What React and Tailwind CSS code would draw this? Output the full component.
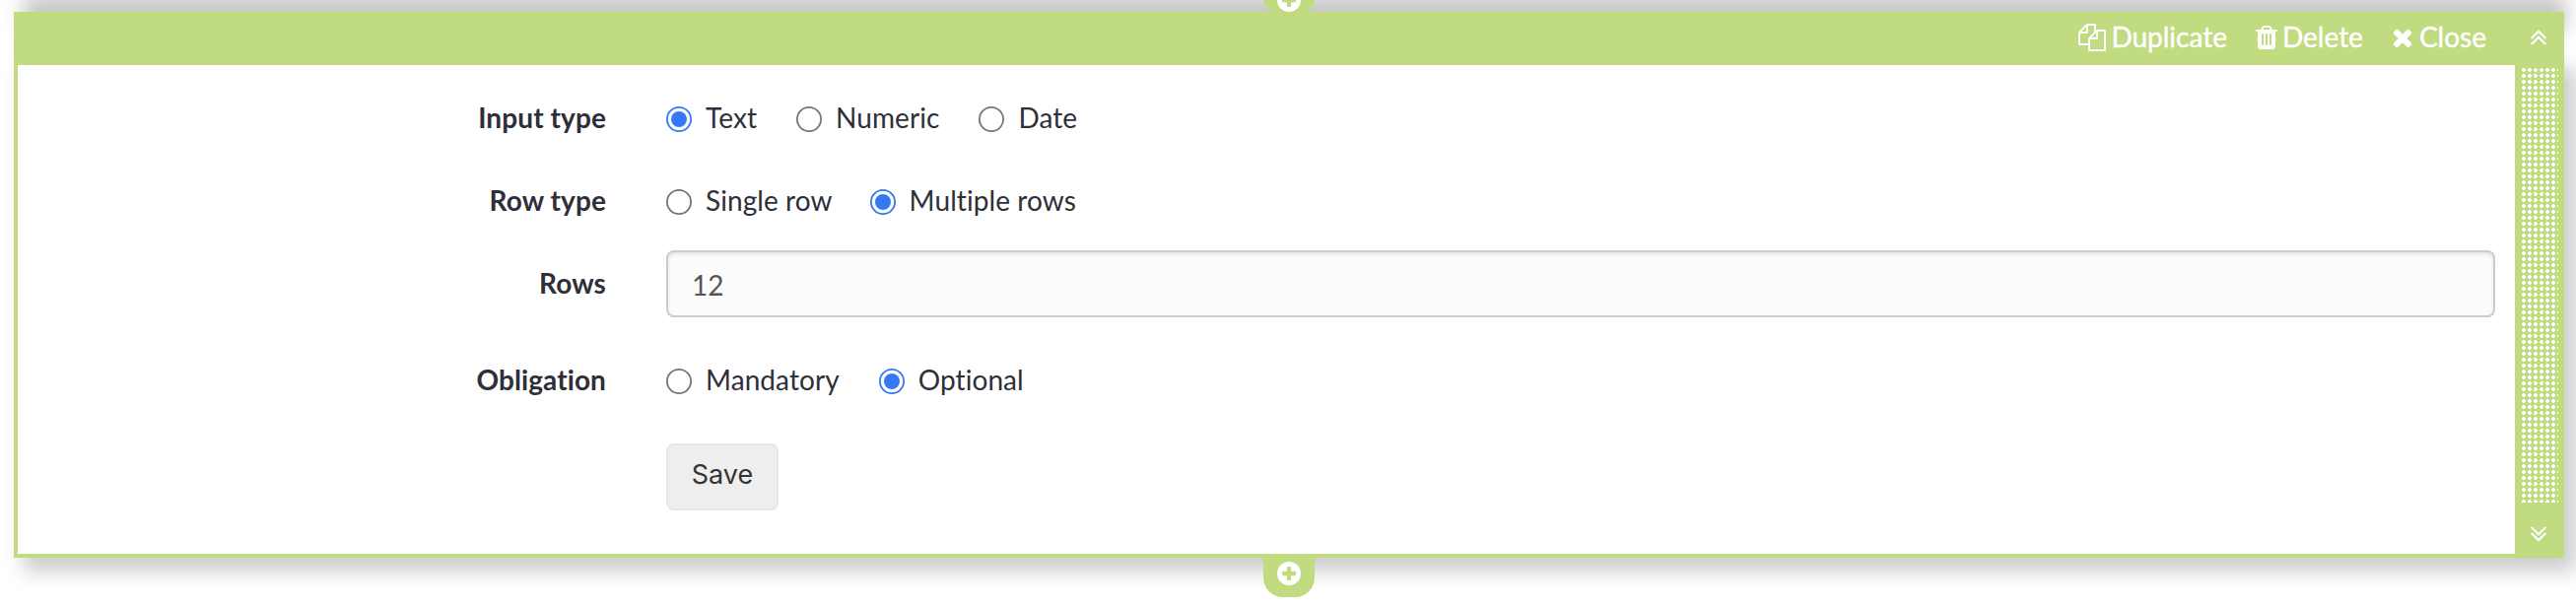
import React from "react";

function Glyph({ d, w, className, h = 1792 }) {
  return (
    <svg viewBox={`0 0 ${w} ${h}`} className={className} fill="currentColor">
      <path d={d} />
    </svg>
  );
}

const COPY =
  "M1696 384q40 0 68 28t28 68v1216q0 40-28 68t-68 28h-960q-40 0-68-28t-28-68v-288h-544q-40 0-68-28t-28-68v-672q0-40 20-88t48-76l408-408q28-28 76-48t88-20h416q40 0 68 28t28 68v328q68-40 128-40h416zm-544 213l-299 299h299v-299zm-640-384l-299 299h299v-299zm196 647l316-316v-416h-384v416q0 40-28 68t-68 28h-416v640h512v-256q0-40 20-88t48-76zm956 804v-1152h-384v416q0 40-28 68t-68 28h-416v640h896z";
const TRASH =
  "M512 1376v-704q0-14-9-23t-23-9h-64q-14 0-23 9t-9 23v704q0 14 9 23t23 9h64q14 0 23-9t9-23zm256 0v-704q0-14-9-23t-23-9h-64q-14 0-23 9t-9 23v704q0 14 9 23t23 9h64q14 0 23-9t9-23zm256 0v-704q0-14-9-23t-23-9h-64q-14 0-23 9t-9 23v704q0 14 9 23t23 9h64q14 0 23-9t9-23zm-544-992h448l-48-117q-7-9-17-11h-317q-10 2-17 11zm928 32v64q0 14-9 23t-23 9h-96v948q0 83-47 143.500t-113 60.500h-832q-66 0-113-58.500t-47-141.500v-952h-96q-14 0-23-9t-9-23v-64q0-14 9-23t23-9h309l70-167q15-37 54-63t79-26h320q40 0 79 26t54 63l70 167h309q14 0 23 9t9 23z";
const TIMES =
  "M1298 1322q0 40-28 68l-136 136q-28 28-68 28t-68-28l-294-294-294 294q-28 28-68 28t-68-28l-136-136q-28-28-28-68t28-68l294-294-294-294q-28-28-28-68t28-68l136-136q28-28 68-28t68 28l294 294 294-294q28-28 68-28t68 28l136 136q28 28 28 68t-28 68l-294 294 294 294q28 28 28 68z";

function PlusTab({ className }) {
  return (
    <div className={`absolute left-1/2 flex w-[52px] -translate-x-1/2 items-end justify-center rounded-b-[20px] bg-[#c1db81] ${className}`}>
      <svg viewBox="0 0 24 24" className="size-6">
        <circle cx="12" cy="12" r="12" fill="white" />
        <rect x="9.800" y="5" width="4.400" height="14" rx=".8" fill="#c1db81" />
        <rect x="5" y="9.800" width="14" height="4.400" rx=".8" fill="#c1db81" />
      </svg>
    </div>
  );
}

function Radio({ label, checked, className }) {
  return (
    <label className={`flex items-center ${className}`}>
      <svg viewBox="0 0 26 26" className="mt-0.5 size-[26px]">
        <circle cx="13" cy="13" r="12.100" fill="white" stroke={checked ? "#3478f6" : "#767676"} strokeWidth="1.800" />
        {checked && <circle cx="13" cy="13" r="8" fill="#3478f6" />}
      </svg>
      <span className="ml-[14px] whitespace-nowrap pb-0.5 tracking-[0.08px]">{label}</span>
    </label>
  );
}

function Row({ label, className, children }) {
  return (
    <div className={`flex items-center ${className}`}>
      <div className="w-[597px] shrink-0 pb-0.5 text-right font-bold tracking-[0.1px]">{label}</div>
      <div className="ml-[61px] flex flex-1 items-center">{children}</div>
    </div>
  );
}

export default function App() {
  return (
    <div className="h-[618px] w-[2614px] overflow-hidden bg-white pl-[14px] pt-3 font-['Lato','Liberation_Sans',sans-serif] text-[28px] leading-10 text-[#2e2f38] [font-variant-ligatures:none]">
      <div className="relative isolate h-[554px] w-[2588px]">
        <div className="absolute -top-[17px] left-[10px] -z-10 h-[37px] w-[2580px] bg-black/22 blur-[10px]" />
        <div className="absolute left-[10px] top-[56px] -z-10 h-[512px] w-[2590px] bg-black/20 blur-[10px]" />
        <div className="flex h-full flex-col bg-[#c1db81]">
          <PlusTab className="-top-3 h-3" />
          <div className="flex h-[54px] shrink-0 items-center text-white">
            <div className="flex flex-1 items-center justify-end pb-0.5 pr-[79px] leading-[48px] [-webkit-text-stroke:0.4px_white]">
              <Glyph d={COPY} w={1792} className="size-7" />
              <span className="ml-[5px] pb-0.5">Duplicate</span>
              <Glyph d={TRASH} w={1408} className="ml-[29px] h-7 w-[22px]" />
              <span className="ml-[5px] pb-0.5">Delete</span>
              <Glyph d={TIMES} w={1408} className="ml-[29px] h-7 w-[22px]" />
              <span className="ml-1.5 pb-0.5">Close</span>
            </div>
          </div>
          <div className="flex flex-1">
            <div className="mb-1 ml-1 w-[2534px] bg-white">
              <Row label="Input type" className="mt-[34px] h-10">
                <Radio label="Text" checked />
                <Radio label="Numeric" className="ml-[40px]" />
                <Radio label="Date" className="ml-[40px]" />
              </Row>
              <Row label="Row type" className="mt-11 h-10">
                <Radio label="Single row" />
                <Radio label="Multiple rows" checked className="ml-[38px]" />
              </Row>
              <Row label="Rows" className="mt-[30px] h-[68px]">
                <input defaultValue="12" className="h-[68px] w-[1856px] rounded-lg border-2 border-[#cccccc] bg-[#fcfcfc] px-6 pt-0.5 text-[#555555] shadow-[inset_0_2px_4px_rgba(0,0,0,0.1)]" />
              </Row>
              <Row label="Obligation" className="mt-[44px] h-10">
                <Radio label="Mandatory" />
                <Radio label="Optional" checked className="ml-[40px]" />
              </Row>
              <Row className="mt-[44px] h-[68px]">
                <button className="h-[68px] w-[114px] rounded-lg border-2 border-[#e6e6e6] bg-[#eeeeee] pb-1 font-['Inter','Liberation_Sans',sans-serif] text-[27px] text-[#333333]">
                  Save
                </button>
              </Row>
            </div>
            <div className="relative w-[50px]">
              <svg viewBox="0 0 16 16" className="absolute -top-9 left-4 size-4" fill="none" stroke="white" strokeWidth="2">
                <path d="M.7 9L8 1.700L15.300 9M.7 15L8 7.700L15.300 15" />
              </svg>
              <svg width="37" height="441" className="absolute left-[7px] top-[3px]">
                <defs>
                  <pattern id="dots" width="6" height="6" patternUnits="userSpaceOnUse">
                    <path d="M1 0h2v1h1v2h-1v1h-2v-1h-1v-2h1z" fill="white" />
                  </pattern>
                </defs>
                <rect width="37" height="441" fill="url(#dots)" />
              </svg>
              <svg viewBox="0 0 16 16" className="absolute bottom-4 left-4 size-4" fill="none" stroke="white" strokeWidth="2">
                <path d="M.7 1L8 8.300L15.300 1M.7 7L8 14.300L15.300 7" />
              </svg>
            </div>
          </div>
          <PlusTab className="top-[554px] h-10 pb-3" />
        </div>
      </div>
    </div>
  );
}
